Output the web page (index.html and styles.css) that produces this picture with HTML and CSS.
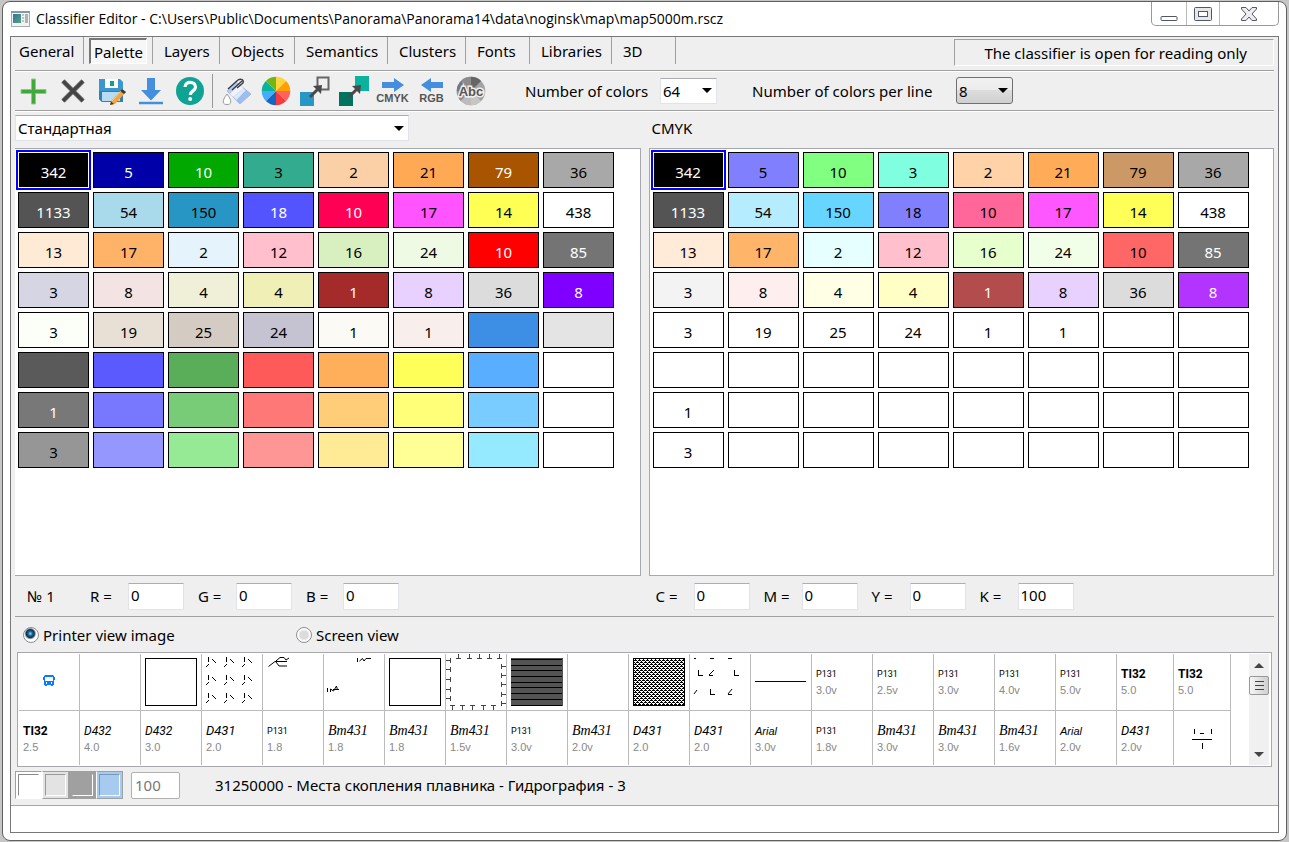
FILE: index.html
```html
<!DOCTYPE html>
<html lang="en">
<head>
<meta charset="utf-8">
<title>Classifier Editor</title>
<link rel="stylesheet" href="styles.css">
</head>
<body>
<div class="window">
  <header class="titlebar">
    <svg class="app-icon" width="19" height="16" viewBox="0 0 19 16"><defs><linearGradient id="app" x1="0" y1="0" x2="1" y2="1"><stop offset="0" stop-color="#3a6ea8"/><stop offset="1" stop-color="#4fa878"/></linearGradient></defs><rect x=".5" y=".5" width="18" height="15" fill="#f2f4f4" stroke="#a5adb1"/><path d="M0 1h19" stroke="#8a979d" stroke-width="2"/><rect x="2" y="3" width="8" height="9" fill="url(#app)"/><path d="M11 4h2M11 7h2M11 10h2" stroke="#8a9499"/><rect x="14" y="3" width="3" height="9" fill="#aab4b8"/></svg>
    <h1 class="title">Classifier Editor - C:\Users\Public\Documents\Panorama\Panorama14\data\noginsk\map\map5000m.rscz</h1>
    <div class="window-buttons">
      <button class="wbtn" aria-label="Minimize"><svg width="18" height="16" viewBox="0 0 18 16"><rect x="1" y="10.500" width="16" height="4" rx="1" fill="#fff" stroke="#535666"/></svg></button>
      <button class="wbtn" aria-label="Maximize"><svg width="18" height="16" viewBox="0 0 18 16"><rect x=".5" y="1.500" width="17" height="13" rx="1" fill="#e8e8ea" stroke="#535666"/><rect x="4.500" y="5.500" width="9" height="5" fill="#fff" stroke="#535666"/></svg></button>
      <button class="wbtn wbtn-close" aria-label="Close"><svg width="16" height="16" viewBox="0 0 16 16"><path d="M.5 1.500h4.500l3 3.500 3-3.500h4.500v1.500l-4.500 5 4.500 5v1.500h-4.500l-3-3.500-3 3.500H.5v-1.500l4.500-5-4.500-5z" fill="#eee" stroke="#535666"/></svg></button>
    </div>
  </header>

  <main class="client">
    <div class="tabbar">
      <nav class="tabs">
        <button class="tab tab-first">General</button>
        <div class="tab-slot"><button class="tab-active" aria-pressed="true">Palette</button></div>
        <button class="tab">Layers</button>
        <button class="tab">Objects</button>
        <button class="tab">Semantics</button>
        <button class="tab">Clusters</button>
        <button class="tab">Fonts</button>
        <button class="tab">Libraries</button>
        <button class="tab">3D</button>
      </nav>
      <p class="notice">The classifier is open for reading only</p>
    </div>

    <div class="toolbar">
      <button class="tool tool-first" aria-label="Add"><svg viewBox="0 0 30 30"><path d="M12.500 3h4v10.500h10.500v4H16.500V28h-4V17.500H2v-4h10.500z" fill="#43a83c" stroke="#8fc98a"/></svg></button>
      <button class="tool" aria-label="Delete"><svg viewBox="0 0 30 30"><path d="M5 5l20 20M25 5L5 25" stroke="#8d8d8d" stroke-width="5"/><path d="M5 5l20 20M25 5L5 25" stroke="#444" stroke-width="3.500"/></svg></button>
      <button class="tool" aria-label="Save"><svg viewBox="0 0 30 30"><path d="M2 3h21l3 3v20H5l-3-3z" fill="#3c97cf"/><path d="M2 15h24v11H5l-3-3z" fill="#337fb4"/><path d="M8 3h13v9H8z" fill="#fff"/><path d="M13 5h4v5h-4z" fill="#10a08c"/><path d="M5 16h18v9H5z" fill="#b7dcf3"/><path d="M25 13l4 3-11 12-5 1 2-5z" fill="#f6a437"/><path d="M25 13l4 3-2 2-4-3z" fill="#3b3b3b"/><path d="M13 29l1-3.500 3 2.500z" fill="#3b3b3b"/><path d="M15 25l8.500-9.500" stroke="#ffd08a"/></svg></button>
      <button class="tool" aria-label="Load"><svg viewBox="0 0 30 30"><path d="M11 2h8v12h6L15 24.500 5 14h6z" fill="#438edd"/><path d="M3 27h24" stroke="#438edd" stroke-width="2.500"/></svg></button>
      <button class="tool" aria-label="Help"><svg viewBox="0 0 30 30"><circle cx="15" cy="15" r="14" fill="#0fa393"/><path d="M10 11c0-6.500 10.500-6 10.500 0 0 4-5.200 3.800-5.200 8" fill="none" stroke="#fff" stroke-width="3.200"/><circle cx="15.200" cy="23" r="2" fill="#fff"/></svg></button>
      <span class="tool-sep"></span>
      <button class="tool" aria-label="Fill"><svg viewBox="0 0 30 30"><path d="M14 6l15 12-11 10L5 15z" fill="#dfe8f8" stroke="#a9b6cc"/><path d="M14 6l7.500 6-10 9L5 15z" fill="#b9caea"/><path d="M17 8.500l4.500 3.500-10.500 9-3-3z" fill="#eef3fc"/><path d="M24 14l5 4-11 10-4-3.500z" fill="#9dbdf0"/><path d="M6 13l10-9M10 14l10-9M15 12l6-5" stroke="#3d3f49" stroke-width="1.500" fill="none"/><path d="M16 4c3-2 6 0 5 3" fill="none" stroke="#3d3f49" stroke-width="1.500"/><path d="M5 18c-6 8-4 10.500 0 10.500s6-2.500 0-10.500z" fill="#fff" stroke="#999"/></svg></button>
      <button class="tool" aria-label="Color wheel"><svg viewBox="0 0 30 30"><path d="M15 15V.7A14.300 14.300 0 0 1 25.100 4.900z" fill="#ffd53b"/><path d="M15 15L25.100 4.900A14.300 14.300 0 0 1 29.300 15z" fill="#ff9f00"/><path d="M15 15h14.300a14.300 14.300 0 0 1-4.200 10.100z" fill="#ff645c"/><path d="M15 15l10.100 10.100A14.300 14.300 0 0 1 15 29.300z" fill="#f23c3f"/><path d="M15 15v14.300A14.300 14.300 0 0 1 4.900 25.100z" fill="#1566c4"/><path d="M15 15L4.900 25.100A14.300 14.300 0 0 1 .7 15z" fill="#43aeff"/><path d="M15 15H.7A14.300 14.300 0 0 1 4.900 4.900z" fill="#0bb39d"/><path d="M15 15L4.900 4.900A14.300 14.300 0 0 1 15 .7z" fill="#70b619"/></svg></button>
      <button class="tool" aria-label="Copy to empty"><svg viewBox="0 0 30 30"><path d="M0 16h14v14H0z" fill="#2897c6"/><path d="M17.500 1.500h11v12h-11z" fill="#f0f0f0" stroke="#666" stroke-width="2"/><path d="M10 21l9-9" stroke="#4a4a4a" stroke-width="3"/><path d="M13 10l9-1-1 9z" fill="#4a4a4a"/></svg></button>
      <button class="tool" aria-label="Copy color"><svg viewBox="0 0 30 30"><path d="M0 16h14v14H0z" fill="#00735f"/><path d="M16 0h14v15H16z" fill="#0bb39d"/><path d="M10 21l9-9" stroke="#4a4a4a" stroke-width="3"/><path d="M13 10l9-1-1 9z" fill="#4a4a4a"/></svg></button>
      <button class="tool tool-text" aria-label="To CMYK"><svg class="arrow" viewBox="0 0 24 14"><path d="M1 4h12V0l10 7-10 7v-4H1z" fill="#438edd"/></svg><span>CMYK</span></button>
      <button class="tool tool-text" aria-label="To RGB"><svg class="arrow" viewBox="0 0 24 14"><path d="M23 4H11V0L1 7l10 7v-4h12z" fill="#438edd"/></svg><span>RGB</span></button>
      <button class="tool" aria-label="Names"><svg viewBox="0 0 30 30"><circle cx="15" cy="15" r="14.300" fill="#a3a3a3"/><path d="M15 15V.7A14.300 14.300 0 0 1 25.100 4.900z" fill="#666"/><path d="M15 15L4.900 4.900A14.300 14.300 0 0 1 15 .7z" fill="#8b8b8b"/><path d="M15 15H.7A14.300 14.300 0 0 1 4.900 4.900z" fill="#777"/><path d="M15 15L4.900 25.100A14.300 14.300 0 0 1 .7 15z" fill="#909090"/><path d="M15 15v14.300A14.300 14.300 0 0 1 4.900 25.100z" fill="#bcbcbc"/><path d="M15 15l10.100 10.100A14.300 14.300 0 0 1 15 29.300z" fill="#c6c6c6"/><text x="15" y="20" text-anchor="middle" class="abc">Abc</text></svg></button>
      <label class="tool-label label-count" for="count">Number of colors</label>
      <span class="combo combo-small"><select id="count"><option>64</option></select><i class="caret"></i></span>
      <label class="tool-label label-line" for="perline">Number of colors per line</label>
      <span class="combo combo-small combo-button"><select id="perline"><option>8</option></select><i class="caret"></i></span>
    </div>

    <div class="pair heads">
      <span class="combo combo-wide"><select aria-label="Palette name"><option>Стандартная</option></select><i class="caret"></i></span>
      <h2 class="head">CMYK</h2>
    </div>

    <div class="pair panels">
      <section class="panel panel-left"><div class="swatches" id="rgb"></div></section>
      <section class="panel"><div class="swatches" id="cmyk"></div></section>
    </div>

    <div class="pair values">
      <div class="fields">
        <span class="number">№ 1</span>
        <label for="r">R =</label><input id="r" value="0">
        <label for="g">G =</label><input id="g" value="0">
        <label for="b">B =</label><input id="b" value="0">
      </div>
      <div class="fields fields-right">
        <label for="c">C =</label><input id="c" value="0">
        <label for="m">M =</label><input id="m" value="0">
        <label for="y">Y =</label><input id="y" value="0">
        <label for="k">K =</label><input id="k" value="100">
      </div>
    </div>

    <div class="views">
      <label class="view"><input type="radio" name="view" checked>Printer view image</label>
      <label class="view"><input type="radio" name="view">Screen view</label>
    </div>

    <div class="gallery">
      <div class="symbols" id="symbols"></div>
      <div class="scroll">
        <button class="scroll-btn" aria-label="Scroll up"><svg width="10" height="5" viewBox="0 0 10 5"><path d="M5 0l5 5H0z" fill="#444"/></svg></button>
        <div class="thumb"><i></i><i></i><i></i></div>
        <button class="scroll-btn scroll-down" aria-label="Scroll down"><svg width="10" height="5" viewBox="0 0 10 5"><path d="M0 0h10L5 5z" fill="#444"/></svg></button>
      </div>
    </div>

    <div class="status">
      <div class="backs">
        <button class="back back-white" aria-label="White background"><i></i></button>
        <button class="back back-light" aria-label="Light background"><i></i></button>
        <button class="back back-dark" aria-label="Dark background"><i></i></button>
        <button class="back back-blue" aria-label="Blue background"><i></i></button>
      </div>
      <input class="scale" value="100" aria-label="Scale">
      <p class="object-name">31250000 - Места скопления плавника - Гидрография - 3</p>
    </div>
    <div class="message"></div>
  </main>
</div>
<script src="script.js"></script>
</body>
</html>
```
FILE: styles.css
```css
* { box-sizing: border-box; }
html { height: 100%; }
body {
  margin: 0;
  padding: 1px 2px;
  min-height: 100%;
  display: flex;
  background: #c6c6c6;
  color: #000;
  font-family: "Noto Sans", "DejaVu Sans Condensed", sans-serif;
  font-size: 15px;
  line-height: 20px;
}
button, input, select { font: inherit; color: inherit; margin: 0; padding: 0; border: 0; background: none; border-radius: 0; }
h1, h2, p { margin: 0; font-size: inherit; font-weight: normal; }
svg { display: block; }

.window {
  flex: 1;
  display: flex;
  flex-direction: column;
  padding: 0 7px 7px;
  border: 1px solid #606060;
  border-radius: 8px;
  background: #fff;
}
.titlebar { display: flex; height: 34px; align-items: center; gap: 6px; }
.app-icon { margin-left: 1px; }
.title { flex: 1; font-family: "Open Sans", "Noto Sans", sans-serif; font-size: 14px; white-space: nowrap; }
.window-buttons { display: flex; align-self: flex-start; height: 24px; border: 1px solid #999; border-top: 0; border-radius: 0 0 5px 5px; }
.wbtn { width: 33px; display: flex; align-items: center; justify-content: center; border-right: 1px solid #bbb; }
.wbtn:first-child { width: 35px; }
.wbtn-close { width: 58px; border-right: 0; }

.client { flex: 1; display: flex; flex-direction: column; border: 1px solid #77777c; background: #efefef; min-width: 0; }

.tabbar { display: flex; justify-content: space-between; margin-right: 4px; height: 33px; }
.tabs { display: grid; grid-template-columns: 73px 69px 67px 75px 93px 78px 64px 82px 64px; height: 27px; }
.tab { border-right: 1px solid #a0a0a0; text-align: left; padding-left: 11px; white-space: nowrap; }
.tab-first { padding-left: 8px; }
.tab-slot { display: flex; border-right: 1px solid #a0a0a0; padding: 1px 5px 0; }
.tab-active { flex: 1; border: 1px solid #fff; border-top: 2px solid #777; border-left: 2px solid #777; background: #f7f7f7; white-space: nowrap; }
.notice { width: 320px; height: 27px; margin-top: 2px; text-align: right; padding-right: 26px; line-height: 27px; border: 1px solid #fff; border-top-color: #a0a0a0; border-left-color: #a0a0a0; white-space: nowrap; }

.toolbar { display: flex; align-items: center; height: 41px; margin: 0 4px; border: 1px solid #a0a0a0; border-width: 1px 0; box-shadow: 0 1px #fff, inset 0 1px #fff; }
.tool { width: 39px; height: 34px; flex: none; display: flex; flex-direction: column; align-items: center; justify-content: center; }
.tool-first { width: 38px; }
.tool svg { width: 30px; height: 30px; }
.tool .arrow { width: 24px; height: 14px; }
.tool-text span { font: bold 11px/12px "Liberation Sans", sans-serif; color: #555; }
.abc { font: bold 13px "Liberation Sans", sans-serif; fill: #555; stroke: #eee; stroke-width: 3px; paint-order: stroke; }
.tool-sep { width: 8px; height: 34px; border-left: 1px solid #999; margin-left: 3px; margin-right: -3px; }
.tool-label { white-space: nowrap; }
.label-count { width: 135px; margin-left: 35px; }
.label-line { width: 204px; margin-left: 35px; }

.combo { display: grid; align-items: center; height: 26px; background: #fff; border: 1px solid #e0e3ea; border-top-color: #abadb3; }
.combo select { grid-area: 1 / 1; width: 100%; height: 24px; padding-left: 2px; appearance: none; }
.caret { grid-area: 1 / 1; justify-self: end; margin-right: 4px; border: 5px solid transparent; border-top-color: #000; border-bottom: 0; pointer-events: none; }
.combo-small { width: 57px; }
.combo-button { height: 27px; border: 1px solid #707070; border-radius: 3px; background: linear-gradient(#f2f2f2, #ebebeb 50%, #dddddd 50%, #cfcfcf); }

.pair { display: grid; grid-template-columns: 1fr 1fr; gap: 8px; margin: 0 4px; }
.heads { height: 37px; align-items: center; padding-bottom: 3px; }
.combo-wide { width: 394px; max-width: 100%; }
.head { padding-left: 3px; }

.panels { flex: 1; }
.panel { border: 1px solid #a6a8b0; background: #fff; padding: 3px; }
.panel-left { border-left: 0; }
.swatches { display: grid; grid-template-columns: repeat(8, 71px); grid-auto-rows: 36px; gap: 4px; }
.swatch { border: 1px solid #000; padding-top: 3px; }
.swatch-light { color: #fff; }
.swatch-current { border-color: #fff; outline: 2px solid #00f; }

.values { height: 41px; align-items: center; border-bottom: 1px solid #a0a0a0; }
.fields { display: grid; grid-template-columns: 63px 38px 70px 38px 70px 37px 56px; align-items: center; padding-left: 12px; white-space: nowrap; }
.fields-right { grid-template-columns: 38px 70px 38px 70px 38px 70px 38px 56px; padding-left: 7px; }
.fields input { width: 56px; height: 27px; padding: 0 2px 2px; background: #fff; border: 1px solid #e0e3ea; border-top-color: #abadb3; border-radius: 1px; }

.views { display: grid; grid-template-columns: 273px 1fr; height: 35px; align-items: center; margin: 0 12px; }
.view { display: flex; align-items: center; gap: 4px; white-space: nowrap; }
.view input { appearance: none; width: 16px; height: 16px; border: 1px solid #8e8f8f; border-radius: 50%; background: radial-gradient(#dcdcdc 4px, #fff 6px); }
.view input:checked { background: radial-gradient(circle at 45% 40%, #9fdcf5, #1b6f9d 2px, #0d2f4d 4px, #fff 6px); }

.gallery { display: flex; justify-content: space-between; margin: 0 6px; padding: 1px; border: 1px solid #a8a8ac; background: #fff; }
.symbols { display: grid; grid-template-columns: repeat(18, 61px) repeat(2, 57px); grid-template-rows: 57px 54px; }
.symbol { border-right: 1px solid #bbb; overflow: hidden; padding: 12px 4px 0; }
.symbol:nth-child(-n+20) { border-bottom: 1px solid #bbb; }
.symbol-art { padding: 0; }
.symbol b { display: block; height: 16px; font-weight: normal; white-space: nowrap; }
.symbol small { display: block; font: 11px/16px "Liberation Sans", sans-serif; color: #888; }
.symbol .f-t { font: bold 12px/16px "Roboto", sans-serif; }
.symbol .f-p { font: 9px/16px "Roboto", sans-serif; }
.symbol .f-d { font: italic 13px/16px "Roboto", sans-serif; }
.symbol .f-o { font: italic 12px/16px "Roboto", sans-serif; }
.symbol .f-b { font: italic 14px/16px "Liberation Serif", serif; }
.symbol .f-a { font: italic 11px/16px "Liberation Sans", sans-serif; }
.scroll { width: 20px; margin-right: 1px; display: flex; flex-direction: column; background: #f0f0f0; }
.scroll-btn { height: 22px; display: flex; align-items: center; justify-content: center; }
.scroll-down { margin-top: auto; }
.thumb { height: 19px; display: flex; flex-direction: column; align-items: center; justify-content: center; gap: 3px; border: 1px solid #979797; border-radius: 2px; background: linear-gradient(90deg, #f5f5f5, #cfcfcf); }
.thumb i { width: 9px; height: 1px; background: #444; }

.status { display: flex; align-items: center; height: 38px; padding: 0 4px 2px; }
.backs { display: flex; }
.back { width: 27px; height: 28px; padding: 2px; border: 1px solid #a0a0a0; border-left-color: #fff; }
.back i { display: block; height: 22px; border: 1px solid; }
.back-white { background: #fff; border: 1px solid #a0a0a0; border-right-color: #fff; border-bottom-color: #fff; }
.back-white i { border-color: #888 #fff #fff #888; }
.back-light { background: #e3e3e3; }
.back-light i { border-color: #999 #fff #fff #999; }
.back-dark { background: #a0a0a0; border-color: #a0a0a0; }
.back-dark i { border-color: #a0a0a0 #fff #fff #a0a0a0; }
.back-blue { background: #a6caf0; }
.back-blue i { border-color: #7c97b3 #fff #fff #7c97b3; }
.scale { width: 49px; height: 27px; margin-left: 8px; padding-left: 3px; color: #777; background: #fff; border: 1px solid #b0b0b0; border-radius: 2px; }
.object-name { margin-left: 35px; white-space: nowrap; }
.message { height: 27px; border-top: 1px solid #a6a8b0; background: #fff; }
```
FILE: script.js
```js
// Each entry: colour, object count, and "w" when the count is written in white.
const rgb = `000000 342 w|0000a8 5 w|00a800 10 w|32ab8f 3|fcd0a6 2|ffa954 21|a85400 79 w|a8a8a8 36
545454 1133 w|a8daec 54|2896c4 150|5454ff 18 w|ff0054 10 w|ff54ff 17|ffff54 14|ffffff 438
ffead6 13|ffb368 17|e4f3fc 2|ffbfcc 12|d8f0c0 16|eefae4 24|ff0000 10 w|747474 85 w
d6d5e3 3|f3e3e3 8|f0f0d8 4|efefb6 4|a52a2a 1 w|e8d0ff 8|dcdcdc 36|8000ff 8 w
fcfff8 3|e8e0d5 19|d4ccc2 25|c5c2d1 24|fbfaf5 1|f8eeec 1|3c8fe4|e4e4e4
5a5a5a|5a5aff|5aae5a|ff5a5a|ffae5a|ffff5a|5aaeff|ffffff
787878 1 w|7878ff|78cc78|ff7878|ffcc78|ffff78|78ccff|ffffff
969696 3|9696ff|96ea96|ff9696|ffea96|ffff96|96eaff|ffffff`;

const cmyk = `000000 342 w|8080ff 5|80ff80 10|80ffe0 3|ffd2a8 2|ffab57 21|cc9966 79|a8a8a8 36
545454 1133 w|b6ecff 54|66d5ff 150|8080ff 18|ff6699 10|ff57ff 17|ffff57 14|ffffff 438
ffebd8 13|ffb569 17|e6ffff 2|ffbfcc 12|e6ffcc 16|f2ffe8 24|ff6666 10|747474 85 w
f3f3f3 3|ffeeee 8|ffffe6 4|ffffc5 4|b34d4d 1 w|e8d0ff 8|dcdcdc 36|b333ff 8 w
ffffff 3|ffffff 19|ffffff 25|ffffff 24|ffffff 1|ffffff 1|ffffff|ffffff
ffffff|ffffff|ffffff|ffffff|ffffff|ffffff|ffffff|ffffff
ffffff 1|ffffff|ffffff|ffffff|ffffff|ffffff|ffffff|ffffff
ffffff 3|ffffff|ffffff|ffffff|ffffff|ffffff|ffffff|ffffff`;

function fill(id, data) {
  document.getElementById(id).innerHTML = data.split(/[|\n]/).map((entry, i) => {
    const [color, count = "", light] = entry.split(" ");
    const cls = "swatch" + (light ? " swatch-light" : "") + (i === 0 ? " swatch-current" : "");
    return `<button class="${cls}" style="background:#${color}">${count}</button>`;
  }).join("");
}
fill("rgb", rgb);
fill("cmyk", cmyk);

const line = (d, color = "#000") => `<path d="${d}" fill="none" stroke="${color}" shape-rendering="crispEdges"/>`;
const curve = d => `<path d="${d}" fill="none" stroke="#000"/>`;
const frame = '<rect x="4.5" y="4.5" width="51" height="47" fill="none" stroke="#000"/>';
const each = (list, f) => list.map(f).join("");

const art = {
  empty: "",
  bus: '<path d="M26 21h8l1 1v1h1v3h-1v5h-1v1h-2v-1h-4v1h-2v-1h-1v-5h-1v-3h1v-1z" fill="#0a7cff"/><path d="M26 23h8v4h-8z" fill="#fff"/><path d="M27 28h1v2h-1zM32 28h1v2h-1z" fill="#fff"/>',
  frame,
  grass: line(each([3, 21, 39], y => each([4, 22, 40], x => `M${x + 2.5} ${y}v5`))) + curve(each([3, 21, 39], y => each([4, 22, 40], x => `M${x} ${y + 10}l3-3M${x + 6} ${y + 2}l4 4`))),
  branch: curve("M5.500 12.500l6.500-5h12M13 7l4-3.500h4l2 2.500 3-2M13 8l3 4h8"),
  twigs: curve("M33.500 4v4M35.500 7l3-2.500 1.500 2.500M40 7l2-2.500h5M3.500 34v4M6.500 38v-3l3 2 3-5 1 4M9 35.500h6"),
  ticks: line(
    each([12, 23, 33, 43, 53], x => `M${x + .5} 0v4M${x - 2} 4.500h5`) +
    each([6, 16, 26, 37, 47], x => `M${x + .5} 56v-4M${x - 2} 51.500h5`) +
    each([6, 15, 25, 35, 44], y => `M0 ${y + .5}h4M4.500 ${y - 2}v5`) +
    each([12, 21, 30, 40, 49], y => `M60 ${y + .5}h-4M55.500 ${y - 2}v5`), "#444"),
  dark: '<path d="M4 4h52v48H4z" fill="#545454"/>' + line(each([5, 11, 16, 22, 28, 33, 39, 45, 51], y => `M4 ${y + .5}h51`)),
  mesh: '<defs><pattern id="mesh" width="4" height="4" patternUnits="userSpaceOnUse"><path d="M0 0h2v1H0zM2 1h1v2h-1zM3 2h1v1h-1zM0 3h1v1H0zM1 2h1v1h-1zM3 0h1v1h-1z"/></pattern></defs><rect x="4.5" y="4.5" width="51" height="47" fill="url(#mesh)" stroke="#000" shape-rendering="crispEdges"/>',
  marks: line("M4 4.500h2M20 4.500h4M38 4.500h4M8.500 16v5.500h4M19 21.500h4M44.500 16v5.500h4M20.500 35v5.500h4M38 40.500h4") + curve("M24 16l-5 5M7 36l-3 4M42 35l-4 5"),
  line: line("M4 27.500h51", "#000040"),
  cross: line("M20.500 18v5M37.500 18v5M26 22.500h4M18 28.500h20M28.500 32v6")
};

const symbols = `bus empty frame grass branch twigs frame ticks dark empty mesh marks line p:P131:3.0v p:P131:2.5v p:P131:3.0v p:P131:4.0v p:P131:5.0v t:TI32:5.0 t:TI32:5.0
t:TI32:2.5 o:D432:4.0 o:D432:3.0 d:D431:2.0 p:P131:1.8 b:Bm431:1.8 b:Bm431:1.8 b:Bm431:1.5v p:P131:3.0v b:Bm431:2.0v d:D431:2.0 d:D431:2.0 a:Arial:3.0v p:P131:1.8v b:Bm431:3.0v b:Bm431:3.0v b:Bm431:1.6v a:Arial:2.0v d:D431:2.0v cross`;

document.getElementById("symbols").innerHTML = symbols.split(/\s/).map(item => {
  if (item in art) {
    return `<div class="symbol symbol-art"><svg width="60" height="56" viewBox="0 0 60 56">${art[item]}</svg></div>`;
  }
  const [font, text, size] = item.split(":");
  return `<div class="symbol"><b class="f-${font}">${text}</b><small>${size}</small></div>`;
}).join("");
```
